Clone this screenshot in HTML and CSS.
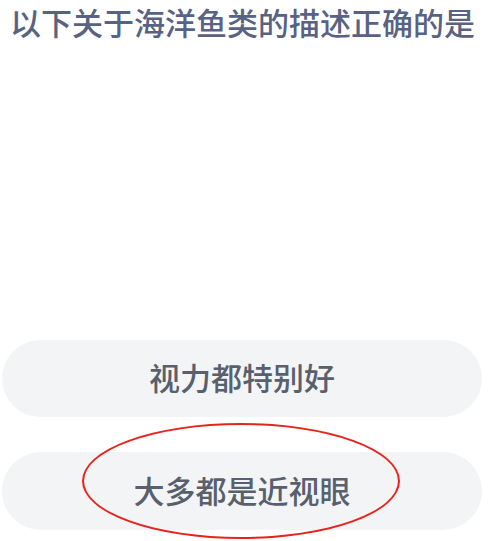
FILE: index.html
```html
<!DOCTYPE html>
<html>
<head>
<meta name="viewport" content="width=device-width, initial-scale=1">
<link rel="stylesheet" href="styles.css">
</head>
<body>

<div class="quiz">
  <h1 class="question">以下关于海洋鱼类的描述正确的是</h1>

  <div class="options">
    <button type="button" class="option">视力都特别好</button>
    <button type="button" class="option answer">大多都是近视眼
      <span class="circle"></span>
    </button>
  </div>
</div>

</body>
</html>
```

FILE: styles.css
```css
body {
    margin: 0;
    background: #fff;
    font-family: "Noto Sans CJK SC", "Noto Sans", sans-serif;
}

.quiz {
    height: 541px;
    display: flex;
    flex-direction: column;
    overflow: hidden;
}

.question {
    margin: 0;
    padding: 0 0 0 10px;
    font-size: 31px;
    line-height: 44px;
    font-weight: 500;
    color: #586283;
    white-space: nowrap;
}

.options {
    margin-top: auto;
    padding: 0 18px 11px 2px;
    display: flex;
    flex-direction: column;
    gap: 35px;
}

.option {
    position: relative;
    height: 77px;
    border: none;
    border-radius: 39px;
    background-color: #f3f4f6;
    color: #58606d;
    font-family: inherit;
    font-size: 31px;
    font-weight: 500;
    padding: 0 0 4px;
    cursor: pointer;
}

.answer {
    height: 78px;
}

/* red hand-drawn mark round the right answer */
.circle {
    position: absolute;
    left: 80px;
    top: -29px;
    width: 314px;
    height: 112px;
    border: 2px solid #e8231c;
    border-radius: 50%;
    pointer-events: none;
}
```
